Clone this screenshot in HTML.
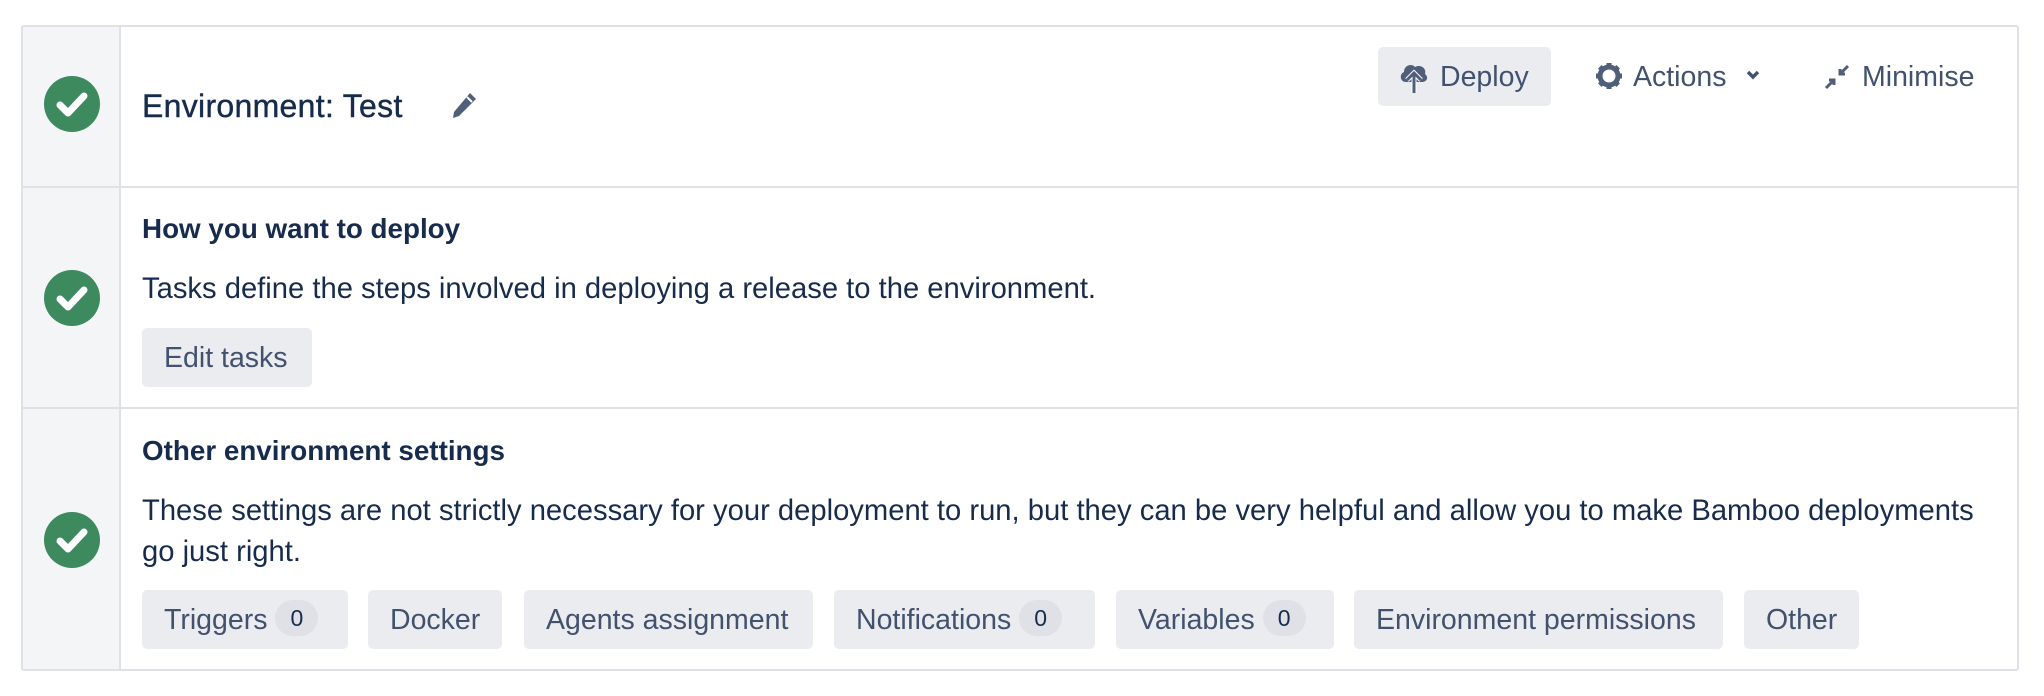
<!DOCTYPE html>
<html><head><meta charset="utf-8"><style>
*{box-sizing:border-box;margin:0;padding:0}
body{width:2044px;height:696px;background:#fff;font-family:"Liberation Sans",sans-serif;color:#172b4d;position:relative;overflow:hidden}
.box{position:absolute;left:21px;top:25px;width:1998px;height:646px;border:2px solid #dfe1e6;border-radius:3px}
.lc{position:absolute;left:0;top:0;width:100px;height:100%;background:#f4f5f7;border-right:2px solid #dfe1e6}
.hr{position:absolute;left:0;right:0;height:2px;background:#dfe1e6}
.chk{position:absolute;left:44px;width:56px;height:56px;border-radius:50%;background:#3d8a5e}
.chk svg{position:absolute;left:0;top:0}
.t{position:absolute;white-space:nowrap}
.btn{position:absolute;height:59px;background:#ebecf0;border-radius:5px;color:#42526e;font-size:28.5px;line-height:61px;white-space:nowrap;padding-left:22px}
.badge{display:inline-block;background:#dfe1e6;border-radius:18px;height:36px;line-height:36px;padding:0 15px;font-size:23px;color:#172b4d;vertical-align:middle;margin-left:8px;position:relative;top:-3px}
</style></head><body>
<div class="lc" style="position:absolute;left:21px;top:25px;height:646px;"></div>
<div class="box"></div>
<div class="hr" style="left:21px;right:25px;top:186px"></div>
<div class="hr" style="left:21px;right:25px;top:407px"></div>

<div class="chk" style="top:76px"><svg width="56" height="56" viewBox="0 0 56 56"><path d="M16 29 L24 37 L40 20" stroke="#fff" stroke-width="7" fill="none" stroke-linecap="round" stroke-linejoin="round"/></svg></div>
<div class="chk" style="top:270px"><svg width="56" height="56" viewBox="0 0 56 56"><path d="M16 29 L24 37 L40 20" stroke="#fff" stroke-width="7" fill="none" stroke-linecap="round" stroke-linejoin="round"/></svg></div>
<div class="chk" style="top:512px"><svg width="56" height="56" viewBox="0 0 56 56"><path d="M16 29 L24 37 L40 20" stroke="#fff" stroke-width="7" fill="none" stroke-linecap="round" stroke-linejoin="round"/></svg></div>

<div class="t" style="left:142px;top:88px;font-size:32px;letter-spacing:0.3px;-webkit-text-stroke:0.4px #172b4d">Environment: Test</div>
<svg style="position:absolute;left:450px;top:91px" width="28" height="30" viewBox="0 0 28 30"><path d="M20 2 L26 8 L9 25 L3 27 L4 21 Z" fill="#505f79"/><path d="M17 6 L22 11" stroke="#fff" stroke-width="2"/></svg>

<div class="btn" style="left:1378px;top:47px;width:173px;color:#42526e;padding-left:22px">
<svg style="position:absolute;left:20px;top:13px" width="32" height="34" viewBox="0 0 32 34"><path d="M8 22 C2 22 1 14 6 12 C6 5 14 3 17 7 C22 4 29 8 27 14 C31 17 29 22 24 22 Z" fill="#505f79"/><path d="M16 33 V14 M9 20 L16 13 L23 20" stroke="#fff" stroke-width="5" fill="none"/><path d="M16 33 V14 M9 20 L16 13 L23 20" stroke="#505f79" stroke-width="3" fill="none"/></svg>
<span style="position:absolute;left:62px">Deploy</span></div>

<svg style="position:absolute;left:1595px;top:62px" width="28" height="28" viewBox="0 0 28 28"><circle cx="14" cy="14" r="9" fill="none" stroke="#505f79" stroke-width="5"/><g stroke="#505f79" stroke-width="5"><path d="M14 1 V6 M14 22 V27 M1 14 H6 M22 14 H27 M4.8 4.8 L8 8 M20 20 L23.2 23.2 M4.8 23.2 L8 20 M20 8 L23.2 4.8"/></g><circle cx="14" cy="14" r="5" fill="#fff"/></svg>
<div class="t" style="left:1633px;top:61px;font-size:28.5px;color:#42526e">Actions</div>
<svg style="position:absolute;left:1745px;top:69px" width="16" height="12" viewBox="0 0 16 12"><path d="M3 3 L8 8 L13 3" stroke="#42526e" stroke-width="3.5" fill="none"/></svg>

<svg style="position:absolute;left:1822px;top:62px" width="30" height="30" viewBox="0 0 30 30"><path d="M4 26 L12 18 M7 18 H12 V23 M26 4 L18 12 M18 7 V12 H23" stroke="#505f79" stroke-width="3" fill="none"/></svg>
<div class="t" style="left:1862px;top:61px;font-size:28.5px;color:#42526e">Minimise</div>

<div class="t" style="left:142px;top:213px;font-size:27.8px;font-weight:bold">How you want to deploy</div>
<div class="t" style="left:142px;top:273px;font-size:29.2px">Tasks define the steps involved in deploying a release to the environment.</div>
<div class="btn" style="left:142px;top:328px;width:170px">Edit tasks</div>

<div class="t" style="left:142px;top:435px;font-size:27.8px;font-weight:bold">Other environment settings</div>
<div class="t" style="left:142px;top:495px;font-size:29.2px">These settings are not strictly necessary for your deployment to run, but they can be very helpful and allow you to make Bamboo deployments</div>
<div class="t" style="left:142px;top:536px;font-size:29.2px">go just right.</div>

<div class="btn" style="left:142px;top:590px;width:206px">Triggers<span class="badge">0</span></div>
<div class="btn" style="left:368px;top:590px;width:134px">Docker</div>
<div class="btn" style="left:524px;top:590px;width:289px">Agents assignment</div>
<div class="btn" style="left:834px;top:590px;width:261px">Notifications<span class="badge">0</span></div>
<div class="btn" style="left:1116px;top:590px;width:218px">Variables<span class="badge">0</span></div>
<div class="btn" style="left:1354px;top:590px;width:369px">Environment permissions</div>
<div class="btn" style="left:1744px;top:590px;width:115px">Other</div>
</body></html>
